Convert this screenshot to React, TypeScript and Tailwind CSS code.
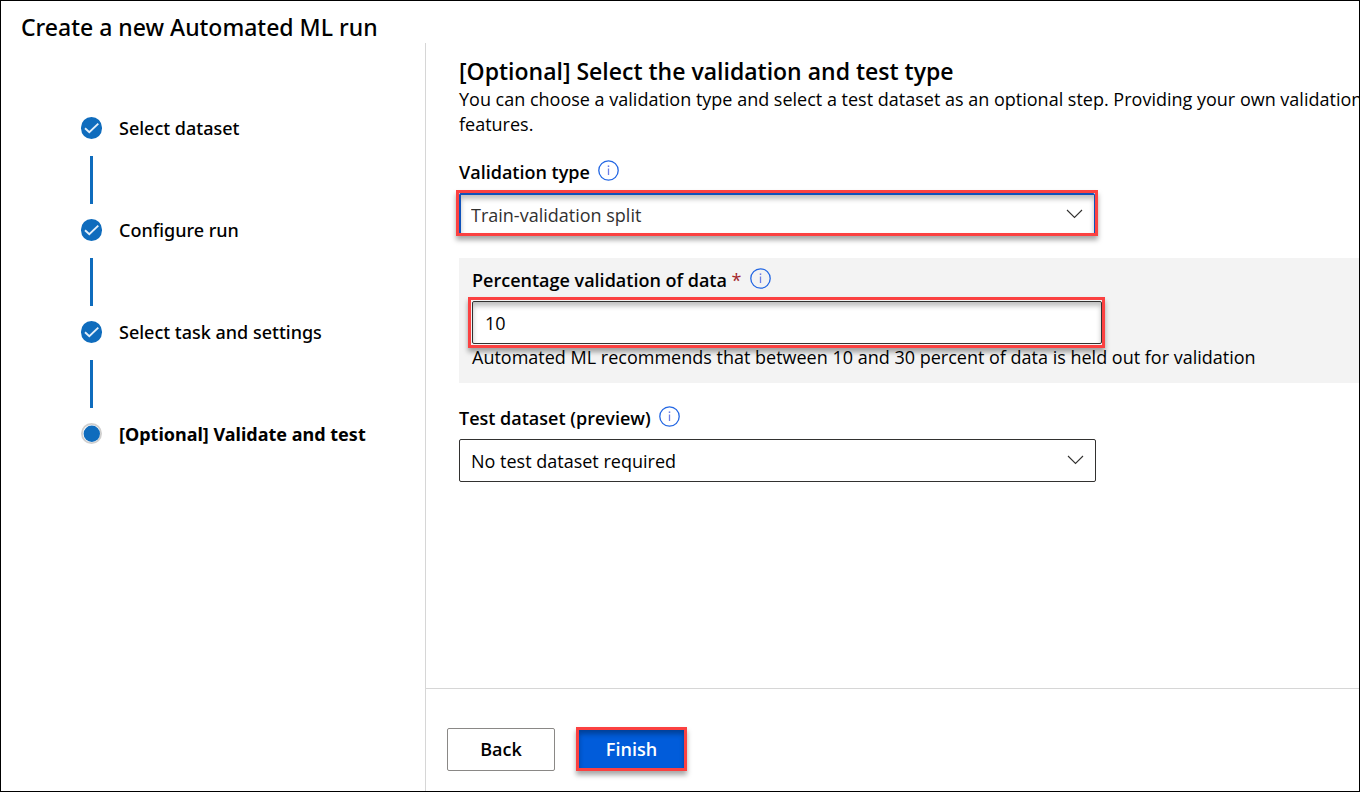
import { useState, type ReactNode } from "react";

type Step = { label: string; done: boolean };

const steps: Step[] = [
  { label: "Select dataset", done: true },
  { label: "Configure run", done: true },
  { label: "Select task and settings", done: true },
  { label: "[Optional] Validate and test", done: false },
];

function DoneIcon() {
  return (
    <svg className="h-[22px] w-[21px] shrink-0" viewBox="0 0 21 22" aria-hidden="true">
      <rect width="21" height="22" rx="10.5" fill="#0f6cbd" />
      <path d="M4 11.3 8.3 15.3 17.3 6.6" fill="none" stroke="#e3effa" strokeWidth="1.9" />
    </svg>
  );
}

function CurrentIcon() {
  return (
    <svg className="h-[22px] w-[21px] shrink-0" viewBox="0 0 21 22" aria-hidden="true">
      <circle cx="10.5" cy="10.5" r="9.6" fill="#fff" stroke="#d0cfce" strokeWidth="1.8" />
      <circle cx="10.8" cy="10.8" r="8.2" fill="#0f6cbd" />
    </svg>
  );
}

function InfoButton({ label }: { label: string }) {
  return (
    <button type="button" aria-label={label} className="mb-[2px] shrink-0">
      <svg className="h-[21px] w-[21px]" viewBox="0 0 21 21" aria-hidden="true">
        <circle cx="10.5" cy="10.5" r="9.7" fill="none" stroke="#2266e3" strokeWidth="1.3" />
        <path d="M10.5 8.5V15" stroke="#6f7fe6" strokeWidth="1.3" />
        <path d="M10.5 5.4V7" stroke="#6f7fe6" strokeWidth="1.5" />
      </svg>
    </button>
  );
}

function Chevron() {
  return (
    <svg
      className="pointer-events-none absolute top-4 right-3 h-[10px] w-[17px]"
      viewBox="0 0 17 10"
      aria-hidden="true"
    >
      <path d="M1 1 8.5 8.5 16 1" fill="none" stroke="#323130" strokeWidth="1.1" />
    </svg>
  );
}

function FieldLabel({ htmlFor, children, info }: { htmlFor: string; children: ReactNode; info: string }) {
  return (
    <div className="flex h-6 items-center gap-2">
      <label htmlFor={htmlFor} className="pt-[2px] text-[18px] leading-6 font-semibold">
        {children}
      </label>
      <InfoButton label={info} />
    </div>
  );
}

export default function App() {
  const [percent, setPercent] = useState("10");

  return (
    <div className="flex min-h-screen flex-col overflow-hidden border border-black bg-white font-['Open_Sans','Noto_Sans',sans-serif] text-black">
      <header className="flex h-[42px] items-start px-5 pt-3">
        <h1 className="font-['Noto_Sans',sans-serif] text-[23px] leading-7 font-medium">
          Create a new Automated ML run
        </h1>
      </header>

      <div className="flex flex-1">
        <nav
          aria-label="Progress"
          className="w-[424px] shrink-0 pt-[74px] pl-20 font-['Noto_Sans',sans-serif] text-[18px]"
        >
          <ol>
            {steps.map((step, i) => (
              <li key={step.label}>
                {i > 0 && <div className="mt-[17px] mb-[15px] ml-[9px] h-12 w-[3px] bg-[#0f6cbd]" />}
                <div
                  className="flex h-[22px] items-center gap-[17px]"
                  aria-current={step.done ? undefined : "step"}
                >
                  {step.done ? <DoneIcon /> : <CurrentIcon />}
                  <span className={step.done ? "font-medium" : "font-bold"}>{step.label}</span>
                </div>
              </li>
            ))}
          </ol>
        </nav>

        <div className="flex min-w-0 flex-1 flex-col border-l border-[#d6d6d6]">
          <main className="flex-1 overflow-hidden pt-[13px] pl-[33px]">
            <h2 className="text-[23px] leading-[30px] font-semibold">
              [Optional] Select the validation and test type
            </h2>
            <p className="pt-px text-[18px] leading-[25px] whitespace-nowrap">
              You can choose a validation type and select a test dataset as an optional step. Providing your own
              validation
              <br />
              features.
            </p>

            <div className="mt-[22px]">
              <FieldLabel htmlFor="validation-type" info="About validation type">
                Validation type
              </FieldLabel>
              <div className="relative mt-[7px] -ml-[3px] h-[46px] w-full max-w-[642px] border-3 border-[#fb4141] shadow-[0_4px_5px_rgba(0,0,0,0.35)]">
                <select
                  id="validation-type"
                  className="block h-full w-full appearance-none rounded-t-xs border-t-2 border-r border-l-2 border-[#0f52ba] bg-white px-[10px] pt-[2px] text-[18px] text-[#323130] shadow-[inset_0_4px_5px_rgba(0,0,0,0.25)] outline-none"
                >
                  <option>Train-validation split</option>
                </select>
                <Chevron />
              </div>
            </div>

            <div className="mt-[22px] bg-[#f3f3f3] pt-[9px] pb-4 pl-[13px]">
              <FieldLabel htmlFor="percentage" info="About percentage validation of data">
                Percentage validation of data <span className="font-normal text-[#a4262c]">*</span>
              </FieldLabel>
              <div className="mt-[6px] -ml-1 h-[51px] w-full max-w-[637px] border-3 border-[#fb4141] bg-[#f3f3f3] p-px pr-0 shadow-[0_4px_5px_rgba(0,0,0,0.35)]">
                <input
                  id="percentage"
                  type="text"
                  inputMode="numeric"
                  value={percent}
                  onChange={(e) => setPercent(e.target.value)}
                  className="block h-full w-full rounded-xs border border-[#323130] bg-white px-3 text-[18px] shadow-[inset_0_4px_5px_rgba(0,0,0,0.25)] outline-none"
                />
              </div>
              <p className="text-[18px] leading-[19px] whitespace-nowrap">
                Automated ML recommends that between 10 and 30 percent of data is held out for validation
              </p>
            </div>

            <div className="mt-[22px]">
              <FieldLabel htmlFor="test-dataset" info="About test dataset">
                Test dataset (preview)
              </FieldLabel>
              <div className="relative mt-[10px] h-[43px] w-full max-w-[637px]">
                <select
                  id="test-dataset"
                  className="block h-full w-full appearance-none rounded-xs border border-[#323130] bg-white px-[11px] pt-[2px] text-[18px] outline-none"
                >
                  <option>No test dataset required</option>
                </select>
                <Chevron />
              </div>
            </div>
          </main>

          <footer className="flex items-start gap-[21px] border-t border-[#d6d6d6] pt-[38px] pb-5 pl-[21px]">
            <button
              type="button"
              className="mt-px h-[43px] w-[108px] rounded-xs border border-[#8a8886] bg-white text-[18px] font-semibold"
            >
              Back
            </button>
            <button
              type="button"
              className="h-11 w-[111px] border-3 border-[#fb4141] bg-[#015cda] text-[18px] font-semibold text-white shadow-[0_4px_5px_rgba(0,0,0,0.35),inset_0_4px_5px_rgba(0,0,0,0.3)]"
            >
              Finish
            </button>
          </footer>
        </div>
      </div>
    </div>
  );
}
